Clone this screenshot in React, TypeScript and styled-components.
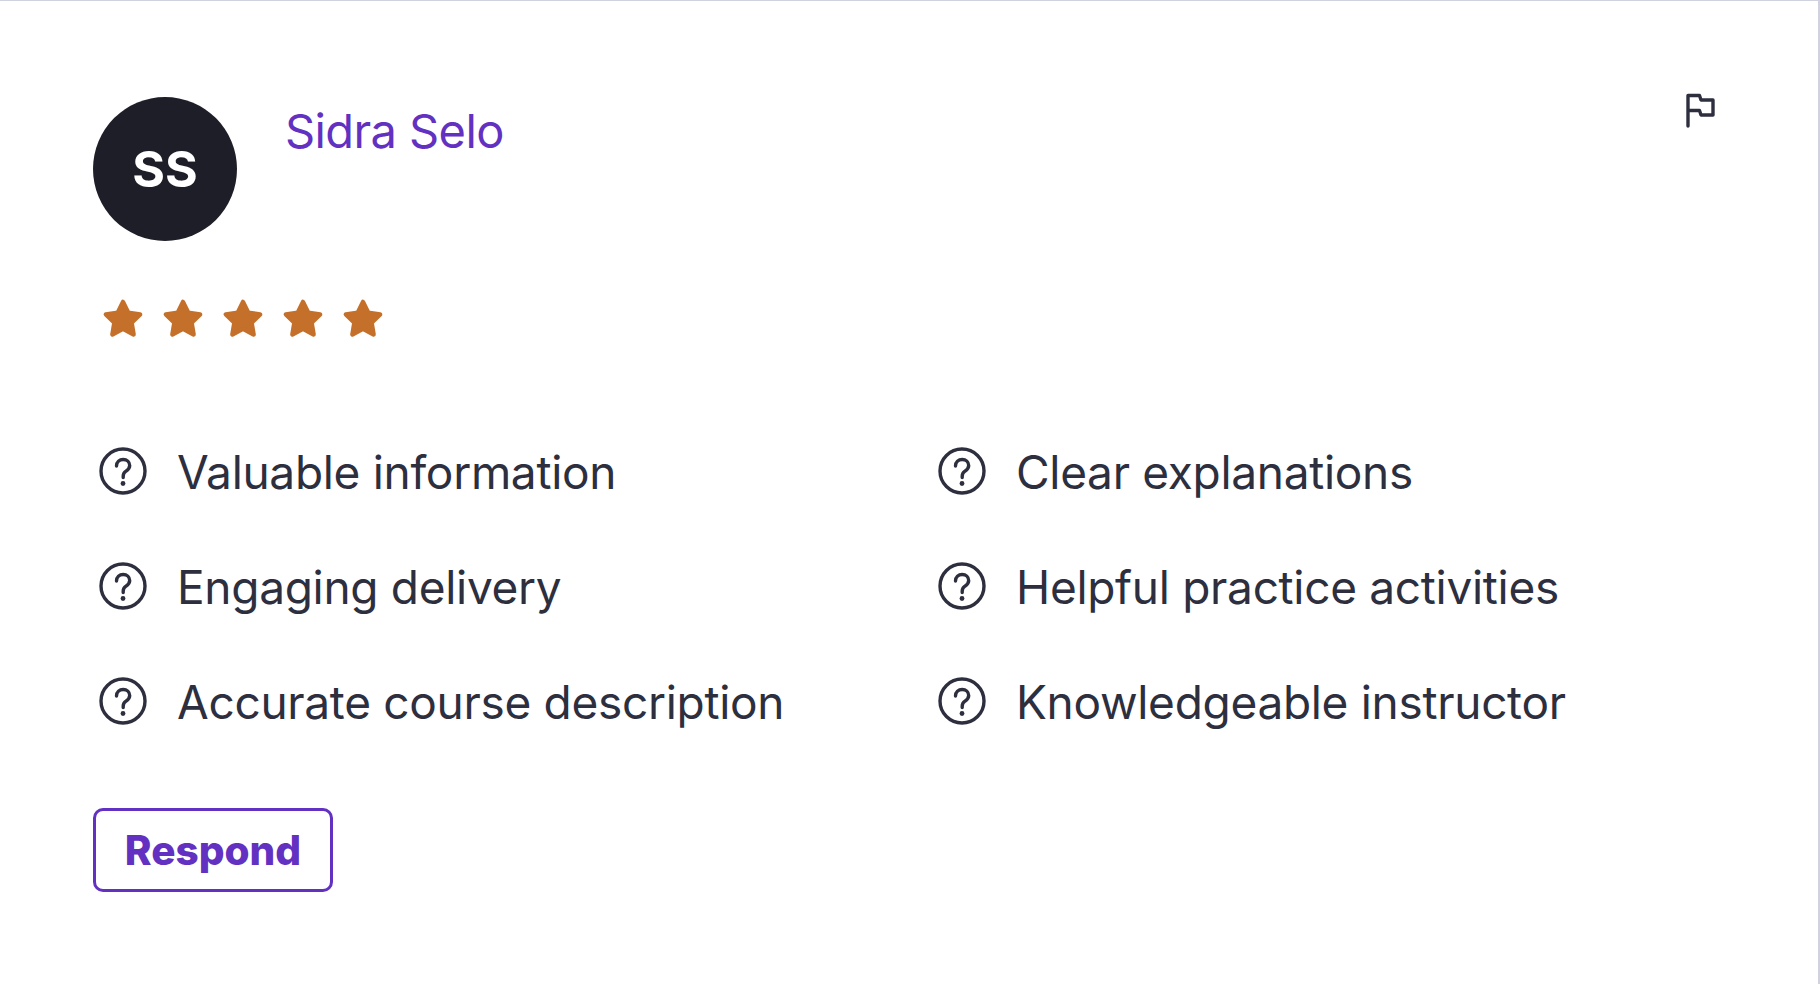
import React from "react";
import styled, { createGlobalStyle } from "styled-components";

const Global = createGlobalStyle`
  html, body { margin: 0; padding: 0; background: #fff; }
  * { box-sizing: border-box; }
`;

const Page = styled.main`
  width: 1820px;
  height: 984px;
  background: #fff;
  border-top: 1px solid #d1d2e0;
  border-right: 2px solid #d1d2e0;
  padding: 96px 102px 0 93px;
  font-family: Inter, "Liberation Sans", sans-serif;
  color: #2d2f3f;
`;

const Header = styled.header`
  display: flex;
  align-items: flex-start;
  height: 144px;
`;

const Avatar = styled.div`
  width: 144px;
  height: 144px;
  border-radius: 50%;
  background: #1d1e27;
  color: #fff;
  display: flex;
  align-items: center;
  justify-content: center;
  font-size: 50px;
  font-weight: 700;
  flex: none;
`;

const Name = styled.a`
  margin-left: 48px;
  margin-top: 6px;
  color: #6331c1;
  font-size: 47px;
  line-height: 56px;
  letter-spacing: -0.6px;
  flex: 1;
`;

const FlagButton = styled.button`
  border: 0;
  background: none;
  padding: 0;
  width: 32px;
  height: 36px;
  margin-top: -5px;
  color: #2d2f3f;
`;

const Stars = styled.div`
  display: flex;
  gap: 18px;
  margin: 57px 0 0 9px;
  height: 42px;
`;

const Answers = styled.ul`
  list-style: none;
  margin: 0;
  padding: 0;
  display: grid;
  grid-template-columns: 839px 1fr;
  grid-auto-rows: 115px;
  margin-top: 107px;
`;

const Answer = styled.li`
  display: flex;
  align-items: center;
  height: 48px;
  padding-left: 6px;
  font-size: 46px;
  letter-spacing: -0.3px;
  gap: 30px;
`;

const AnswerText = styled.span`
  padding-top: 2px;
`;

const Respond = styled.button`
  display: block;
  width: 240px;
  height: 84px;
  margin-top: 16px;
  border: 3px solid #6331c1;
  border-radius: 10px;
  background: #fff;
  color: #6331c1;
  font-family: Inter, "Liberation Sans", sans-serif;
  font-size: 40.5px;
  font-weight: 800;
  padding: 0;
`;

const Flag = () => (
  <svg width="32" height="36" viewBox="0 0 32 36" fill="none" stroke="currentColor" strokeWidth="3.4" strokeLinejoin="round" strokeLinecap="round">
    <path d="M4 34V3.500H15.500L17 8H29V23H17L15.500 18.500H4" />
  </svg>
);

const Star = () => (
  <svg width="42" height="42" viewBox="2 2 38 38" fill="#c4702a" stroke="#c4702a" strokeWidth="4" strokeLinejoin="round">
    <polygon points="21,5.500 25.800,15.300 36.500,16.800 28.800,24.300 30.600,35 21,29.900 11.400,35 13.200,24.300 5.500,16.800 16.200,15.300" />
  </svg>
);

const QuestionIcon = styled.svg`
  flex: none;
`;

const Question = () => (
  <QuestionIcon width="48" height="48" viewBox="0 0 48 48" fill="none" stroke="currentColor" strokeWidth="3.4">
    <circle cx="24" cy="24" r="22" />
    <path d="M17.500 19c0-4 3-6.500 6.700-6.500s6.500 2.500 6.500 6c0 3-1.800 4.300-3.700 5.700-1.900 1.300-2.800 2.600-2.800 5v1.300" strokeLinecap="round" />
    <circle cx="24" cy="36.500" r="2.400" fill="currentColor" stroke="none" />
  </QuestionIcon>
);

const items = [
  "Valuable information",
  "Clear explanations",
  "Engaging delivery",
  "Helpful practice activities",
  "Accurate course description",
  "Knowledgeable instructor",
];

export default function App() {
  return (
    <Page>
      <Global />
      <Header>
        <Avatar>SS</Avatar>
        <Name>Sidra Selo</Name>
        <FlagButton aria-label="Report"><Flag /></FlagButton>
      </Header>
      <Stars>
        {[0, 1, 2, 3, 4].map((i) => <Star key={i} />)}
      </Stars>
      <Answers>
        {items.map((t) => (
          <Answer key={t}><Question /><AnswerText>{t}</AnswerText></Answer>
        ))}
      </Answers>
      <Respond>Respond</Respond>
    </Page>
  );
}
